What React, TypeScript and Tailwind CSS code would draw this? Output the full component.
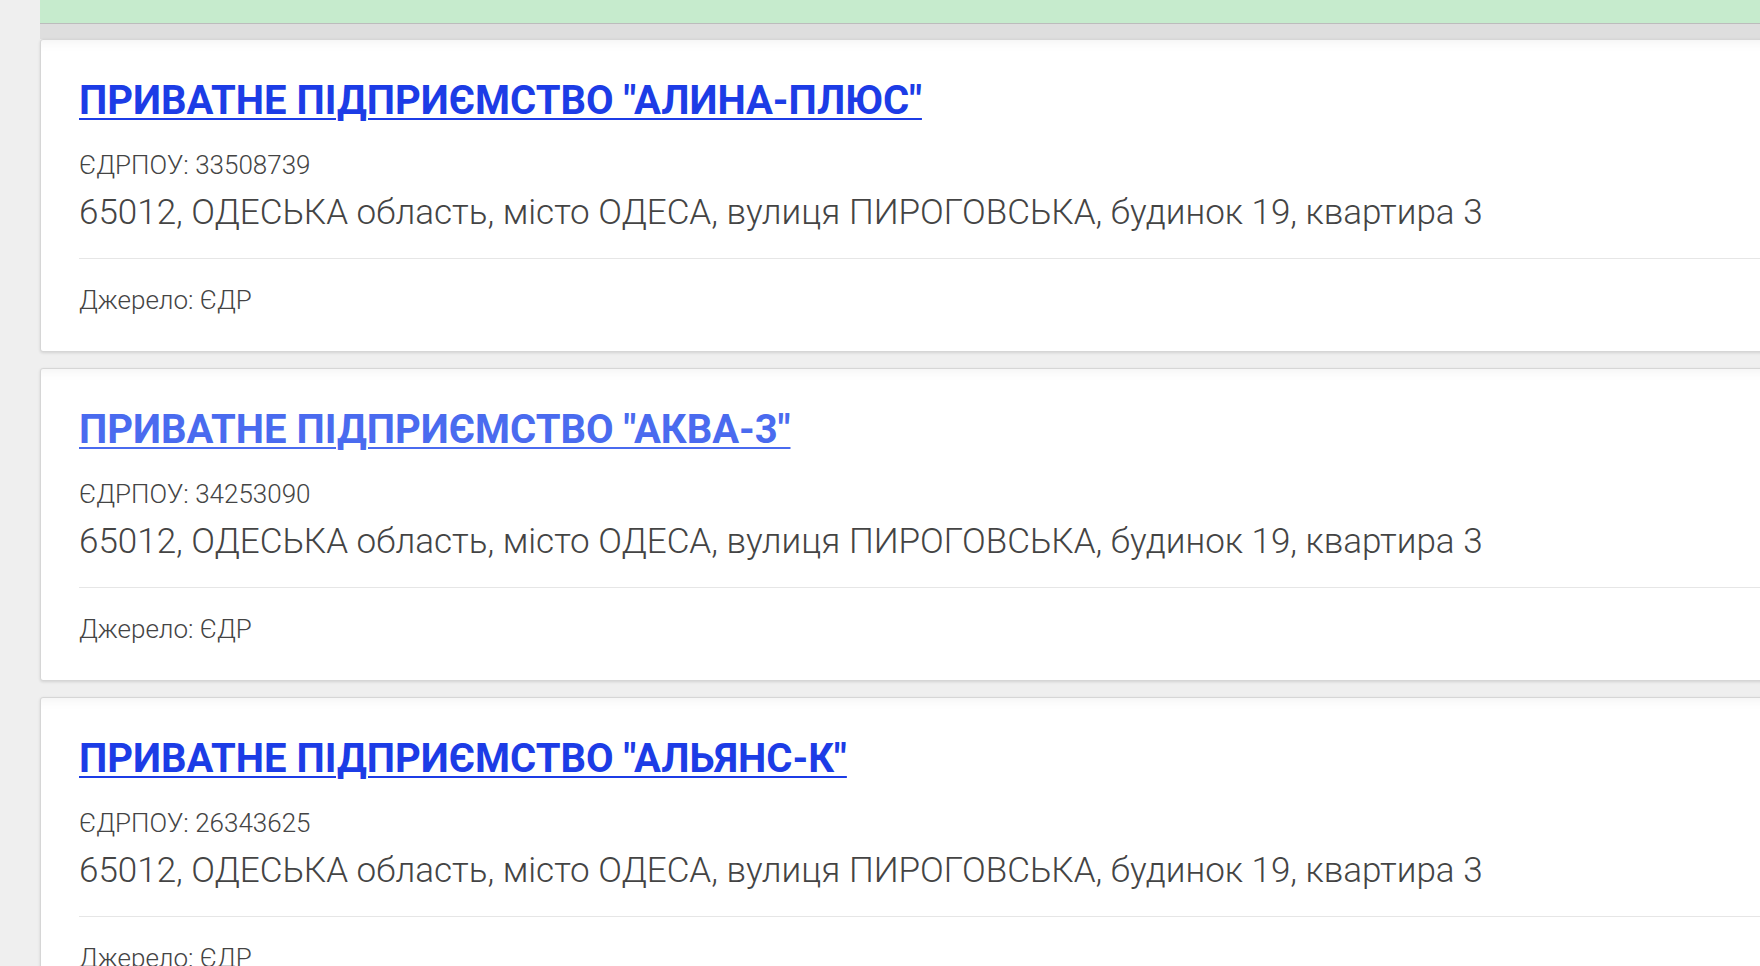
import React from "react";

interface Company {
  name: string;
  edrpou: string;
  address: string;
  visited?: boolean;
}

const companies: Company[] = [
  {
    name: 'ПРИВАТНЕ ПІДПРИЄМСТВО "АЛИНА-ПЛЮС"',
    edrpou: "33508739",
    address: "65012, ОДЕСЬКА область, місто ОДЕСА, вулиця ПИРОГОВСЬКА, будинок 19, квартира 3",
  },
  {
    name: 'ПРИВАТНЕ ПІДПРИЄМСТВО "АКВА-3"',
    edrpou: "34253090",
    address: "65012, ОДЕСЬКА область, місто ОДЕСА, вулиця ПИРОГОВСЬКА, будинок 19, квартира 3",
    visited: true,
  },
  {
    name: 'ПРИВАТНЕ ПІДПРИЄМСТВО "АЛЬЯНС-К"',
    edrpou: "26343625",
    address: "65012, ОДЕСЬКА область, місто ОДЕСА, вулиця ПИРОГОВСЬКА, будинок 19, квартира 3",
  },
];

function CompanyCard({ company }: { company: Company }) {
  return (
    <div className="mb-[16px] rounded-[3px] border border-[#d6d6d6] bg-white pl-[38px] pt-[37px] pb-[35px] shadow-[0_1px_3px_rgba(0,0,0,0.12),inset_0_14px_14px_-14px_rgba(0,0,0,0.07)]">
      <a
        href="#"
        className={
          company.visited
            ? "block w-fit text-[40px] leading-[48px] font-bold text-[#4a6bef] underline decoration-2 underline-offset-[4px]"
            : "block w-fit text-[40px] leading-[48px] font-bold text-[#1c3ce6] underline decoration-2 underline-offset-[4px]"
        }
      >
        {company.name}
      </a>
      <div className="mt-[24px] text-[26px] leading-[32px] font-light text-[#444]">
        ЄДРПОУ: {company.edrpou}
      </div>
      <div className="mt-[12px] text-[35px] leading-[40px] font-light text-[#444]">
        {company.address}
      </div>
      <div className="mt-[25px] border-t border-[#e6e6e6]" />
      <div className="mt-[25px] text-[26px] leading-[32px] font-light text-[#444]">
        Джерело: ЄДР
      </div>
    </div>
  );
}

export default function App() {
  return (
    <div className="h-screen overflow-hidden bg-[#efefef] font-['Roboto','Liberation_Sans',sans-serif]">
      <div className="ml-[40px] w-[1760px]">
        <div className="h-[24px] border-b border-[#bcbcbc] bg-[#c6ebcd]" />
        <div className="h-[15px] bg-[#dedede]" />
        {companies.map((c) => (
          <CompanyCard key={c.edrpou} company={c} />
        ))}
      </div>
    </div>
  );
}
